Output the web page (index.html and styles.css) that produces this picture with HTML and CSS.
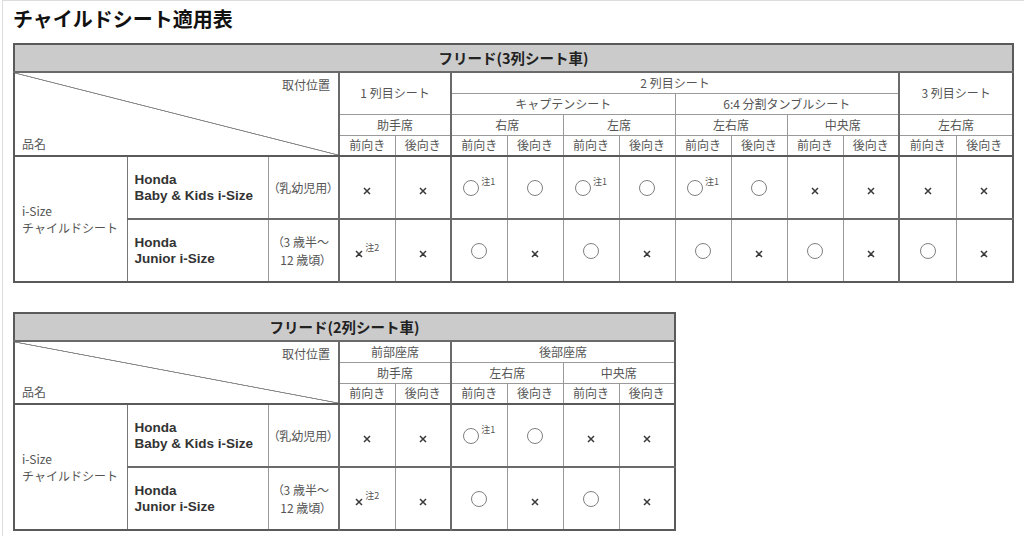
FILE: index.html
```html
<!DOCTYPE html>
<html lang="ja">
<head>
<meta charset="utf-8">
<title>チャイルドシート適用表</title>
<link rel="stylesheet" href="styles.css">
</head>
<body>
<div class="page">
  <h1 class="title">チャイルドシート適用表</h1>

  <table class="grid t1">
    <colgroup>
      <col class="c-cat"><col class="c-prod"><col class="c-age">
      <col class="c-s"><col class="c-s"><col class="c-s"><col class="c-s"><col class="c-s"><col class="c-s">
      <col class="c-s"><col class="c-s"><col class="c-s"><col class="c-s"><col class="c-s2"><col class="c-s2">
    </colgroup>
    <tr class="r-band"><th colspan="15" class="band">フリード(3列シート車)</th></tr>
    <tr class="r-h">
      <th colspan="3" rowspan="4" class="diag"><div class="diag-in"><span class="pos">取付位置</span><span class="name">品名</span></div></th>
      <th colspan="2" rowspan="2" class="gl">1 列目シート</th>
      <th colspan="8" class="gl">2 列目シート</th>
      <th colspan="2" rowspan="2" class="gl">3 列目シート</th>
    </tr>
    <tr class="r-h">
      <th colspan="4" class="gl">キャプテンシート</th>
      <th colspan="4">6:4 分割タンブルシート</th>
    </tr>
    <tr class="r-h">
      <th colspan="2" class="gl">助手席</th>
      <th colspan="2" class="gl">右席</th>
      <th colspan="2">左席</th>
      <th colspan="2">左右席</th>
      <th colspan="2">中央席</th>
      <th colspan="2" class="gl">左右席</th>
    </tr>
    <tr class="r-h r-last">
      <th class="gl">前向き</th><th>後向き</th>
      <th class="gl">前向き</th><th>後向き</th>
      <th>前向き</th><th>後向き</th>
      <th>前向き</th><th>後向き</th>
      <th>前向き</th><th>後向き</th>
      <th class="gl">前向き</th><th>後向き</th>
    </tr>
    <tr class="r-b">
      <td rowspan="2" class="cat">i-Size<br>チャイルドシート</td>
      <td class="prod">Honda<br>Baby &amp; Kids i-Size</td>
      <td class="age">（乳幼児用）</td>
      <td class="gl"><span class="mk"><svg class="x" viewBox="0 0 8 8"><path d="M1 1L7 7M7 1L1 7"/></svg></span></td>
      <td><span class="mk"><svg class="x" viewBox="0 0 8 8"><path d="M1 1L7 7M7 1L1 7"/></svg></span></td>
      <td class="gl"><span class="mk"><span class="o"></span><sup>注1</sup></span></td>
      <td><span class="mk"><span class="o"></span></span></td>
      <td><span class="mk"><span class="o"></span><sup>注1</sup></span></td>
      <td><span class="mk"><span class="o"></span></span></td>
      <td><span class="mk"><span class="o"></span><sup>注1</sup></span></td>
      <td><span class="mk"><span class="o"></span></span></td>
      <td><span class="mk"><svg class="x" viewBox="0 0 8 8"><path d="M1 1L7 7M7 1L1 7"/></svg></span></td>
      <td><span class="mk"><svg class="x" viewBox="0 0 8 8"><path d="M1 1L7 7M7 1L1 7"/></svg></span></td>
      <td class="gl"><span class="mk"><svg class="x" viewBox="0 0 8 8"><path d="M1 1L7 7M7 1L1 7"/></svg></span></td>
      <td><span class="mk"><svg class="x" viewBox="0 0 8 8"><path d="M1 1L7 7M7 1L1 7"/></svg></span></td>
    </tr>
    <tr class="r-b r-b2">
      <td class="prod">Honda<br>Junior i-Size</td>
      <td class="age">（3 歳半〜<br>12 歳頃）</td>
      <td class="gl"><span class="mk"><svg class="x" viewBox="0 0 8 8"><path d="M1 1L7 7M7 1L1 7"/></svg><sup>注2</sup></span></td>
      <td><span class="mk"><svg class="x" viewBox="0 0 8 8"><path d="M1 1L7 7M7 1L1 7"/></svg></span></td>
      <td class="gl"><span class="mk"><span class="o"></span></span></td>
      <td><span class="mk"><svg class="x" viewBox="0 0 8 8"><path d="M1 1L7 7M7 1L1 7"/></svg></span></td>
      <td><span class="mk"><span class="o"></span></span></td>
      <td><span class="mk"><svg class="x" viewBox="0 0 8 8"><path d="M1 1L7 7M7 1L1 7"/></svg></span></td>
      <td><span class="mk"><span class="o"></span></span></td>
      <td><span class="mk"><svg class="x" viewBox="0 0 8 8"><path d="M1 1L7 7M7 1L1 7"/></svg></span></td>
      <td><span class="mk"><span class="o"></span></span></td>
      <td><span class="mk"><svg class="x" viewBox="0 0 8 8"><path d="M1 1L7 7M7 1L1 7"/></svg></span></td>
      <td class="gl"><span class="mk"><span class="o"></span></span></td>
      <td><span class="mk"><svg class="x" viewBox="0 0 8 8"><path d="M1 1L7 7M7 1L1 7"/></svg></span></td>
    </tr>
  </table>

  <table class="grid t2">
    <colgroup>
      <col class="c-cat"><col class="c-prod"><col class="c-age">
      <col class="c-s"><col class="c-s"><col class="c-s"><col class="c-s"><col class="c-s"><col class="c-s">
    </colgroup>
    <tr class="r-band"><th colspan="9" class="band">フリード(2列シート車)</th></tr>
    <tr class="r-h">
      <th colspan="3" rowspan="3" class="diag"><div class="diag-in"><span class="pos">取付位置</span><span class="name">品名</span></div></th>
      <th colspan="2" class="gl">前部座席</th>
      <th colspan="4" class="gl">後部座席</th>
    </tr>
    <tr class="r-h">
      <th colspan="2" class="gl">助手席</th>
      <th colspan="2" class="gl">左右席</th>
      <th colspan="2">中央席</th>
    </tr>
    <tr class="r-h r-last">
      <th class="gl">前向き</th><th>後向き</th>
      <th class="gl">前向き</th><th>後向き</th>
      <th>前向き</th><th>後向き</th>
    </tr>
    <tr class="r-b">
      <td rowspan="2" class="cat">i-Size<br>チャイルドシート</td>
      <td class="prod">Honda<br>Baby &amp; Kids i-Size</td>
      <td class="age">（乳幼児用）</td>
      <td class="gl"><span class="mk"><svg class="x" viewBox="0 0 8 8"><path d="M1 1L7 7M7 1L1 7"/></svg></span></td>
      <td><span class="mk"><svg class="x" viewBox="0 0 8 8"><path d="M1 1L7 7M7 1L1 7"/></svg></span></td>
      <td class="gl"><span class="mk"><span class="o"></span><sup>注1</sup></span></td>
      <td><span class="mk"><span class="o"></span></span></td>
      <td><span class="mk"><svg class="x" viewBox="0 0 8 8"><path d="M1 1L7 7M7 1L1 7"/></svg></span></td>
      <td><span class="mk"><svg class="x" viewBox="0 0 8 8"><path d="M1 1L7 7M7 1L1 7"/></svg></span></td>
    </tr>
    <tr class="r-b r-b2">
      <td class="prod">Honda<br>Junior i-Size</td>
      <td class="age">（3 歳半〜<br>12 歳頃）</td>
      <td class="gl"><span class="mk"><svg class="x" viewBox="0 0 8 8"><path d="M1 1L7 7M7 1L1 7"/></svg><sup>注2</sup></span></td>
      <td><span class="mk"><svg class="x" viewBox="0 0 8 8"><path d="M1 1L7 7M7 1L1 7"/></svg></span></td>
      <td class="gl"><span class="mk"><span class="o"></span></span></td>
      <td><span class="mk"><svg class="x" viewBox="0 0 8 8"><path d="M1 1L7 7M7 1L1 7"/></svg></span></td>
      <td><span class="mk"><span class="o"></span></span></td>
      <td><span class="mk"><svg class="x" viewBox="0 0 8 8"><path d="M1 1L7 7M7 1L1 7"/></svg></span></td>
    </tr>
  </table>
</div>
</body>
</html>
```
FILE: styles.css
```css
html, body {
  margin: 0;
  padding: 0;
  background: #fff;
}
body {
  font-family: "Noto Sans CJK JP", "Noto Sans", sans-serif;
  color: #555;
}
.page {
  margin-left: 2px;
  border-top: 1px solid #dcdcdc;
  border-left: 1px solid #dcdcdc;
  padding-left: 10px;
  height: 535px;
}
.title {
  margin: 0;
  height: 42px;
  line-height: 36px;
  font-size: 20px;
  font-weight: 700;
  color: #111;
}
.grid {
  border-collapse: collapse;
  table-layout: fixed;
  border: 2px solid #5a5a5a;
}
.t1 { width: 999px; }
.t2 { width: 661px; margin-top: 29px; }
.c-cat { width: 113px; }
.c-prod { width: 141px; }
.c-age { width: 71px; }
.c-s { width: 56px; }
.c-s2 { width: 57px; }

.grid th, .grid td {
  border: 1px solid #9a9a9a;
  padding: 0;
  text-align: center;
  vertical-align: middle;
  font-weight: 400;
  font-size: 12px;
  line-height: 16px;
  color: #555;
  white-space: nowrap;
}
.r-band { height: 28px; }
.r-h { height: 21px; }
.r-b { height: 63px; }

.grid .band {
  background: #cbcbcb;
  font-weight: 700;
  font-size: 14.5px;
  color: #222;
  border-bottom: 2px solid #6a6a6a;
}
.grid .gl { border-left: 2px solid #6a6a6a; }
.grid .r-last th { border-bottom: 2px solid #5a5a5a; }
.grid .r-b2 td { border-top: 2px solid #6a6a6a; }
.grid .diag {
  border-bottom: 2px solid #5a5a5a;
  border-right: 2px solid #6a6a6a;
  background: linear-gradient(to top right, transparent calc(50% - 0.8px), #8a8a8a calc(50% - 0.3px), #8a8a8a calc(50% + 0.3px), transparent calc(50% + 0.8px));
}
.diag-in {
  display: flex;
  flex-direction: column;
  justify-content: space-between;
  height: 80px;
  padding: 3px 8px 2px 7px;
  box-sizing: border-box;
}
.t2 .diag-in { height: 59px; }
.pos { align-self: flex-end; }
.name { align-self: flex-start; }

.grid .cat {
  text-align: left;
  padding-left: 7px;
  line-height: 17.5px;
  border-color: #777;
  border-top: 2px solid #5a5a5a;
}
.grid .prod {
  text-align: left;
  padding-left: 7px;
  font-family: "Liberation Sans", Arial, sans-serif;
  font-weight: 700;
  font-size: 13.5px;
  color: #333;
  border-left-color: #777;
}
.grid .age {
  font-size: 12px;
  line-height: 17.5px;
  font-feature-settings: "palt";
}

.mk {
  display: inline-flex;
  align-items: flex-start;
  vertical-align: middle;
}
.o {
  display: inline-block;
  width: 16px;
  height: 16px;
  box-sizing: border-box;
  border: 1.3px solid #808080;
  border-radius: 50%;
}
.x {
  width: 8px;
  height: 8px;
  margin-top: 4px;
  fill: none;
  stroke: #3a3a3a;
  stroke-width: 1.5;
}
.mk sup {
  font-size: 9px;
  line-height: 9px;
  color: #555;
  margin-left: 2px;
  margin-top: -3px;
  vertical-align: top;
}
```
